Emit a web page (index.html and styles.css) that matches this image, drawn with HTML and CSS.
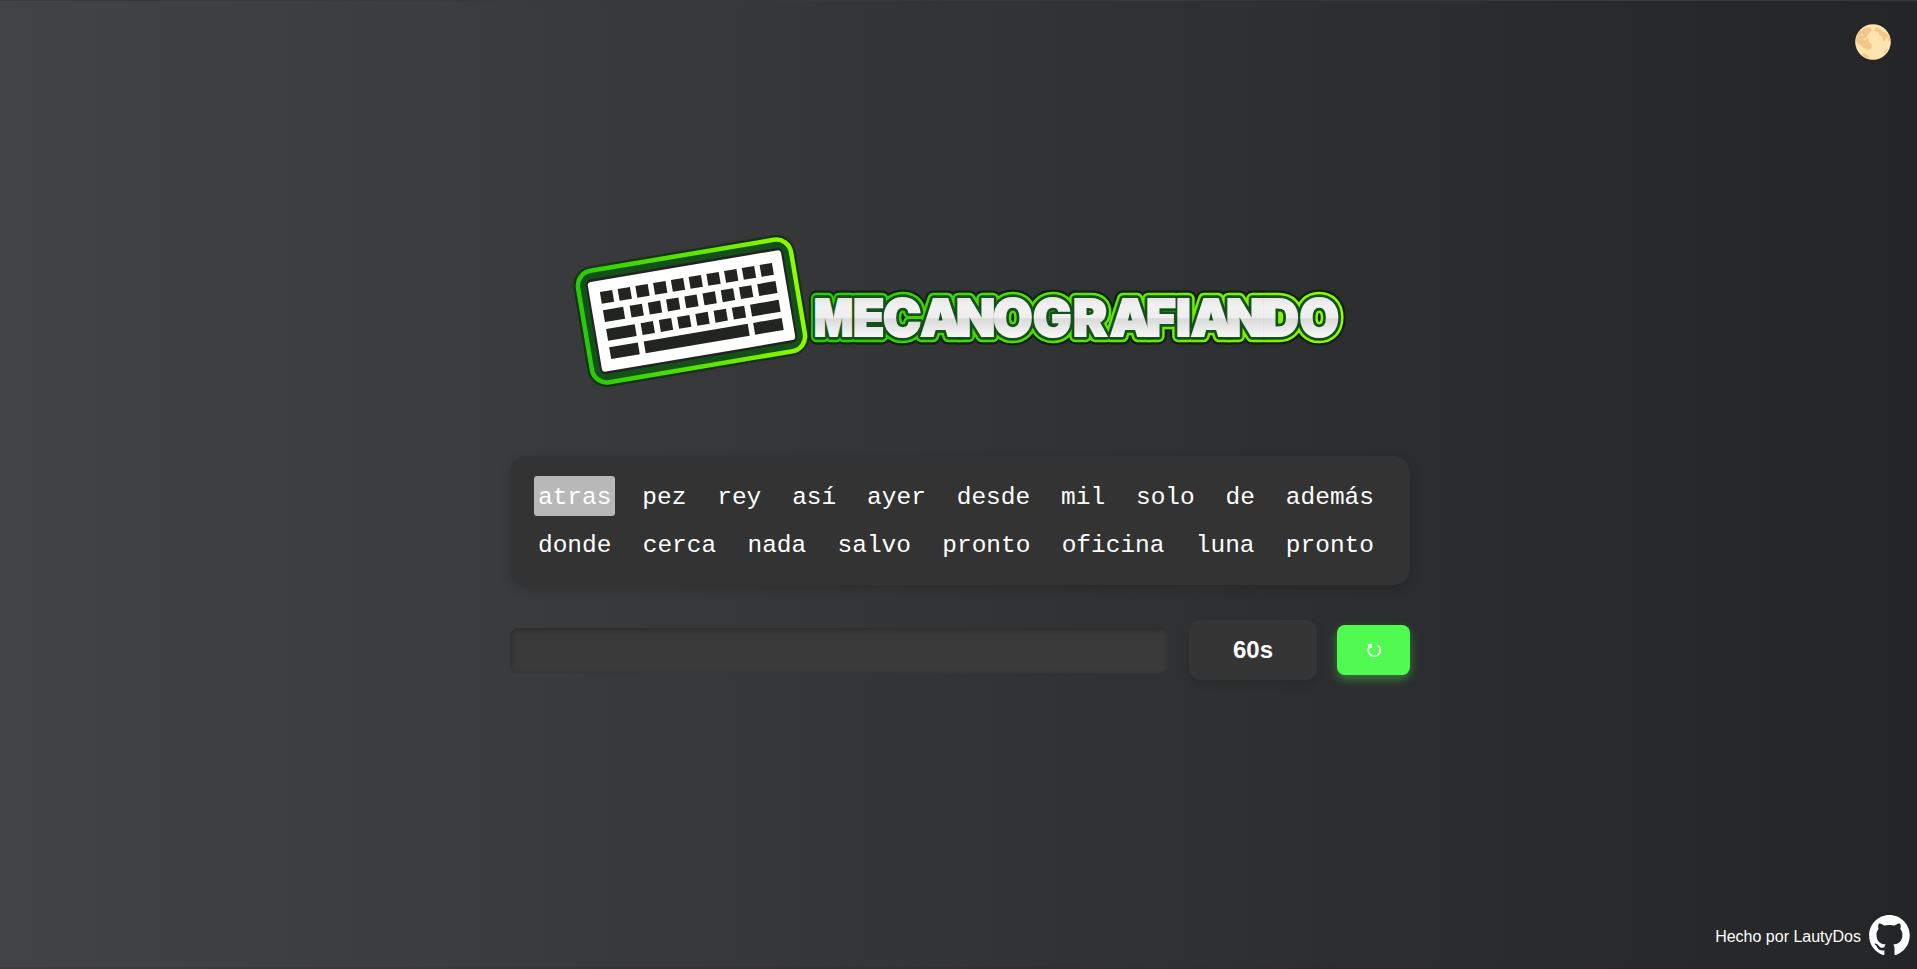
FILE: index.html
```html
<!DOCTYPE html>
<html lang="es">
<head>
<meta charset="utf-8">
<title>Mecanografiando</title>
<link rel="stylesheet" href="styles.css">
</head>
<body>
<header class="topbar">
  <button class="theme" aria-label="Cambiar tema">
    <svg viewBox="0 0 36 36" width="36" height="36">
      <defs><clipPath id="disc"><circle cx="18" cy="18" r="17.8"/></clipPath></defs>
      <circle cx="18" cy="18" r="17.8" fill="#ffe5ad"/>
      <g fill="#f3c68b" clip-path="url(#disc)">
        <path d="M8 5c2-2 6-2 8-1 2 2 0 4-2 5-2 3-1 4-3 5 2-1 4 2 2 4 3 0 5 3 3 6-2 3-5 2-7 0-2-1-3-3-5-4-3-1-4-4-2-7 0-4 3-6 6-8z"/>
        <path d="M20 4c2-1 4 0 5 1 2 1 3 3 5 3 3 2 5 5 5 9-2 2-2-4-4-4 0 2-1 4-2 4-2 0-1-4-2-5-3 1-3-3-4-4-3 0-4-2-3-4z"/>
        <path d="M7 30c2-1 5 0 6 2l1 3-3-1zM28 29c1-2 3-3 5-5l-2 5z"/>
      </g>
      <circle cx="10" cy="15" r="1.6" fill="#ffe5ad"/><circle cx="7" cy="11" r="1" fill="#ffe5ad"/>
    </svg>
  </button>
</header>
<main class="app">
  <svg class="logo" viewBox="565 225 790 170" width="790" height="170" role="img" aria-label="Mecanografiando">
    <defs>
      <linearGradient id="kb" gradientUnits="userSpaceOnUse" x1="-113" y1="0" x2="113" y2="0"><stop offset="0" stop-color="#25cb06"/><stop offset="1" stop-color="#91fb00"/></linearGradient>
      <linearGradient id="edge" gradientUnits="userSpaceOnUse" x1="810" y1="0" x2="1344" y2="0"><stop offset="0" stop-color="#25cb06"/><stop offset="1" stop-color="#91fb00"/></linearGradient>
      <linearGradient id="face" gradientUnits="userSpaceOnUse" x1="0" y1="298" x2="0" y2="338"><stop offset="0" stop-color="#e6e6e6"/><stop offset=".2" stop-color="#f1f1f1"/><stop offset=".49" stop-color="#eeeeee"/><stop offset=".52" stop-color="#dadada"/><stop offset="1" stop-color="#f8f8f8"/></linearGradient>
    </defs>
    <g transform="translate(691.5 311) rotate(-9.6)">
      <rect x="-108" y="-56.500" width="216" height="113" rx="15" fill="#14501a" stroke="#0d2f0a" stroke-opacity=".75" stroke-width="9"/>
      <rect x="-108" y="-56.500" width="216" height="113" rx="15" fill="#14501a" stroke="url(#kb)" stroke-width="4.5"/>
      <rect x="-100" y="-48" width="200" height="96" rx="6" fill="#22241f"/>
      <rect x="-98" y="-45.5" width="196" height="91" rx="3.5" fill="#fff"/>
      <g fill="#22241f" transform="translate(.8 0)">
        <path d="M-88-34h12.500v12h-12.500zM-70-34h12.500v12h-12.500zM-52-34h12.500v12h-12.500zM-34-34h12.500v12h-12.500zM-16-34h12.500v12h-12.500zM2-34h12.500v12H2zM20-34h12.500v12H20zM38-34h12.500v12H38zM56-34h12.500v12H56zM74-34h12.500v12H74z"/>
        <path d="M-88-15.500h20.500v12h-20.500zM-61-15.500h12.500v12h-12.500zM-42.500-15.500h12.500v12h-12.500zM-24-15.500h12.500v12h-12.500zM-5.500-15.500h12.500v12h-12.500zM13-15.500h12.500v12H13zM31.500-15.500h12.500v12h-12.500zM50-15.500h12.500v12H50zM68.500-15.500H87v12H68.500z"/>
        <path d="M-88 3.500h29v12h-29zM-53 3.500h12.500v12h-12.500zM-34.500 3.500h12.500v12h-12.500zM-16 3.500h12.500v12h-12.500zM2.500 3.500h12.500v12h-12.500zM21 3.500h12.500v12H21zM39.500 3.500h12.500v12h-12.500zM58 3.500h29v12H58z"/>
        <path d="M-88 22h29v12h-29zM-53 22H52.500v12H-53zM58 22h29v12H58z"/>
      </g>
    </g>
    <g class="title halo"><text x="814" y="336" textLength="39" lengthAdjust="spacingAndGlyphs">M</text><text y="336" x="853 883 920.500 956 993 1033 1073 1110 1146 1176 1191 1226 1262 1299.500">ECANOGRAFIANDO</text></g>
    <g class="title rim"><text x="814" y="336" textLength="39" lengthAdjust="spacingAndGlyphs">M</text><text y="336" x="853 883 920.500 956 993 1033 1073 1110 1146 1176 1191 1226 1262 1299.500">ECANOGRAFIANDO</text></g>
    <g class="title inner"><text x="814" y="336" textLength="39" lengthAdjust="spacingAndGlyphs">M</text><text y="336" x="853 883 920.500 956 993 1033 1073 1110 1146 1176 1191 1226 1262 1299.500">ECANOGRAFIANDO</text></g>
    <g class="title face"><text x="814" y="336" textLength="39" lengthAdjust="spacingAndGlyphs">M</text><text y="336" x="853 883 920.500 956 993 1033 1073 1110 1146 1176 1191 1226 1262 1299.500">ECANOGRAFIANDO</text></g>
  </svg>
  <section class="words">
    <div class="line"><span class="word current">atras</span><span class="word">pez</span><span class="word">rey</span><span class="word">así</span><span class="word">ayer</span><span class="word">desde</span><span class="word">mil</span><span class="word">solo</span><span class="word">de</span><span class="word">además</span></div>
    <div class="line"><span class="word">donde</span><span class="word">cerca</span><span class="word">nada</span><span class="word">salvo</span><span class="word">pronto</span><span class="word">oficina</span><span class="word">luna</span><span class="word">pronto</span></div>
  </section>
  <section class="controls">
    <input class="entry" type="text" aria-label="Palabra">
    <div class="timer">60s</div>
    <button class="restart" aria-label="Reiniciar"><svg viewBox="0 0 16 16" width="16" height="16"><path d="M11.400 3.100A6 6 0 1 1 4.200 3.900" fill="none" stroke="#fff" stroke-width="1.600"/><path d="M1.200 2.300L6 1.700L6 6.800L4.500 5L3 4.600z" fill="#fff"/></svg></button>
  </section>
</main>
<footer class="credit">
  <span class="author">Hecho por LautyDos</span>
  <svg viewBox="0 0 98 96" width="41" height="40" fill="#fff"><path d="M48.854 0C21.839 0 0 22 0 49.217c0 21.756 13.993 40.172 33.405 46.690 2.427.49 3.316-1.059 3.316-2.362 0-1.141-.08-5.052-.08-9.127-13.590 2.934-16.420-5.867-16.420-5.867-2.184-5.704-5.420-7.170-5.420-7.170-4.448-3.015.324-3.015.324-3.015 4.934.326 7.523 5.052 7.523 5.052 4.367 7.496 11.404 5.378 14.235 4.074.404-3.178 1.699-5.378 3.074-6.600-10.839-1.141-22.243-5.378-22.243-24.283 0-5.378 1.940-9.778 5.014-13.200-.485-1.222-2.184-6.275.486-13.038 0 0 4.125-1.304 13.426 5.052a46.970 46.970 0 0 1 12.214-1.630c4.125 0 8.330.571 12.213 1.630 9.302-6.356 13.427-5.052 13.427-5.052 2.670 6.763.970 11.816.485 13.038 3.155 3.422 5.015 7.822 5.015 13.200 0 18.905-11.404 23.060-22.324 24.283 1.780 1.548 3.316 4.481 3.316 9.126 0 6.600-.08 11.897-.08 13.526 0 1.304.890 2.853 3.316 2.364 19.412-6.520 33.405-24.935 33.405-46.691C97.707 22 75.788 0 48.854 0z"/></svg>
</footer>
</body>
</html>
```
FILE: styles.css
```css
* { box-sizing: border-box; }
body {
  margin: 0;
  height: 969px;
  display: flex;
  flex-direction: column;
  overflow: hidden;
  background: linear-gradient(to right, #414345, #232526);
  border-top: 1px solid #38393a;
  border-bottom: 2px solid rgba(60, 30, 60, .2);
  color: #fff;
  font-family: "Liberation Sans", Arial, sans-serif;
}
.topbar { display: flex; justify-content: flex-end; padding: 23px 26px 0 0; height: 60px; }
.theme { border: 0; padding: 0; background: none; width: 36px; height: 36px; }
.theme svg { display: block; }
.app { flex: 1; width: 900px; margin-left: 510px; padding-top: 164px; }
.logo { display: block; margin-left: 55px; overflow: visible; }
.title { font: 900 51px Inter, sans-serif; stroke-linejoin: round; }
.halo { fill: #0a1c08; stroke: #0a1c08; stroke-width: 17px; opacity: .85; }
.rim { fill: url(#edge); stroke: url(#edge); stroke-width: 12.500px; }
.inner { fill: #14501a; stroke: #14501a; stroke-width: 7.500px; }
.face { fill: url(#face); stroke: url(#face); stroke-width: 2px; stroke-linejoin: miter; }
.words {
  margin-top: 61px;
  height: 129px;
  padding: 20px 32px 0 24px;
  display: flex;
  flex-direction: column;
  gap: 8px;
  background: #333;
  border-radius: 16px;
  box-shadow: 0 4px 12px rgba(0, 0, 0, .15);
}
.line { display: flex; justify-content: space-between; }
.word {
  height: 40px;
  padding: 0 4px;
  border-radius: 3px;
  font: 24.480px/44px "Liberation Mono", monospace;
}
.current { background: #b8b8b8; }
.controls { display: flex; align-items: center; margin-top: 35px; height: 60px; }
.entry {
  width: 658px;
  height: 45px;
  margin-top: 1px;
  padding: 0 12px;
  border: 0;
  border-radius: 8px;
  background: #3a3a3a;
  box-shadow: inset 1px 2px 5px rgba(0, 0, 0, .25);
}
.timer {
  width: 128px;
  height: 60px;
  margin: 0 20px 0 21px;
  border-radius: 12px;
  background: #353535;
  box-shadow: 0 4px 8px rgba(0, 0, 0, .12);
  font: bold 24px/60px "Liberation Sans", Arial, sans-serif;
  text-align: center;
}
.restart {
  display: flex;
  align-items: center;
  justify-content: center;
  width: 73px;
  height: 50px;
  padding: 0;
  border: 0;
  border-radius: 8px;
  background: #50fa50;
  box-shadow: 0 4px 10px rgba(80, 250, 80, .4);
}
.credit {
  display: flex;
  justify-content: flex-end;
  align-items: center;
  gap: 8px;
  padding-right: 7px;
  height: 40px;
  margin-bottom: 12px;
  font-size: 16px;
}
.author { padding-top: 3px; }
```
